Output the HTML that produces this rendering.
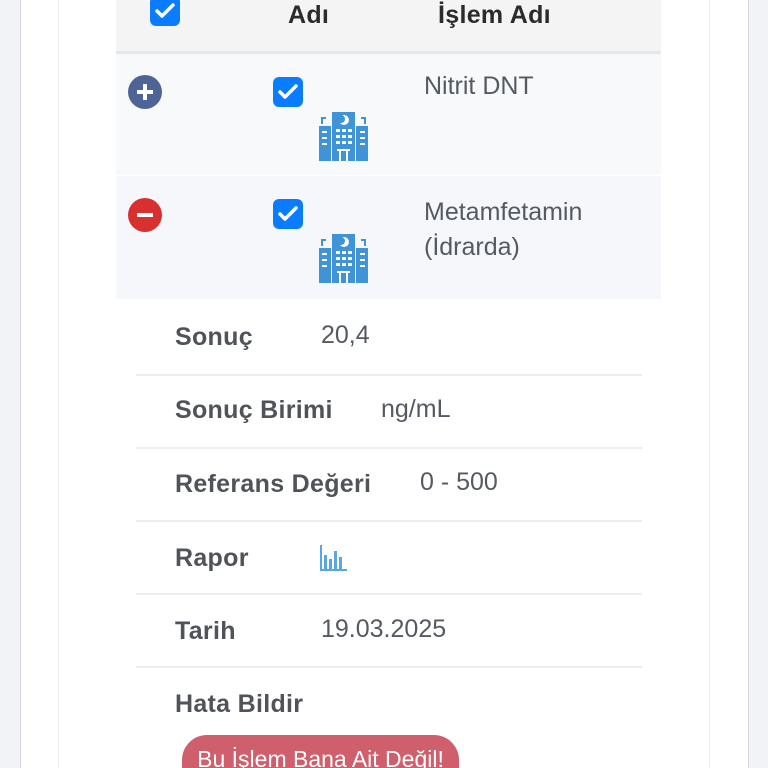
<!DOCTYPE html>
<html style="overflow:hidden;width:768px;height:768px"><head><meta charset="utf-8"><style>
body{margin:0;width:768px;height:768px;overflow:hidden;background:#f2f3f7;font-family:"Liberation Sans",sans-serif;position:relative}
.card{position:absolute;left:20px;top:0;width:727px;height:768px;background:#fff;border-left:1px solid #d8d8dc;border-right:1px solid #d8d8dc}
.vl{position:absolute;top:0;height:768px;width:1px;background:#ececf0}
.hdr{position:absolute;left:116px;top:0;width:545px;height:51px;background:#f4f4f5;border-bottom:3px solid #e6e7ea}
.row{position:absolute;left:116px;width:545px;background:#f8f9fb}
.cb{position:absolute;width:30px;height:30px;background:#0a7cff;border-radius:6px}
.cb svg{position:absolute;left:5px;top:6px}
.t{position:absolute;font-size:25px;color:#555a62}
.b{position:absolute;font-size:25px;font-weight:bold;color:#50535a;letter-spacing:0.3px}
.sep{position:absolute;left:136px;width:506px;height:2px;background:#ededef}
.circ{position:absolute;width:34px;height:34px;border-radius:50%}
</style></head><body>
<div class="card"></div>
<div class="vl" style="left:58px"></div>
<div class="vl" style="left:709px"></div>
<div class="hdr"></div>
<div class="cb" style="left:150px;top:-4px"><svg width="20" height="18" viewBox="0 0 20 18"><path d="M2 9l5 5L18 3" stroke="#fff" stroke-width="3.5" fill="none" stroke-linecap="round" stroke-linejoin="round"/></svg></div>
<div class="b" style="left:288px;top:1px;color:#2b2b2e">Adı</div>
<div class="b" style="left:438px;top:1px;color:#2b2b2e">İşlem Adı</div>

<div class="row" style="top:54px;height:121px"></div>
<div class="row" style="top:176px;height:123px;background:#f6f7fa"></div>

<div class="circ" style="left:128px;top:75px;background:#4f6496"><svg width="34" height="34"><path d="M17 9v16M9 17h16" stroke="#fff" stroke-width="4"/></svg></div>
<div class="circ" style="left:128px;top:198px;background:#d7302f"><svg width="34" height="34"><path d="M9 17h16" stroke="#fff" stroke-width="4"/></svg></div>

<div class="cb" style="left:273px;top:77px"><svg width="20" height="18" viewBox="0 0 20 18"><path d="M2 9l5 5L18 3" stroke="#fff" stroke-width="3.5" fill="none" stroke-linecap="round" stroke-linejoin="round"/></svg></div>
<div class="cb" style="left:273px;top:199px"><svg width="20" height="18" viewBox="0 0 20 18"><path d="M2 9l5 5L18 3" stroke="#fff" stroke-width="3.5" fill="none" stroke-linecap="round" stroke-linejoin="round"/></svg></div>

<svg style="position:absolute;left:319px;top:112px" width="49" height="49" viewBox="0 0 49 49"><g fill="#3f93d6"><rect x="0" y="14" width="12" height="35"/><rect x="37" y="14" width="12" height="35"/><rect x="13" y="0" width="23" height="49"/><path d="M2 12V5h5v2H4v5zM47 12V5h-5v2h3v5z"/></g><circle cx="25" cy="8" r="5" fill="#fff"/><circle cx="22" cy="7" r="4" fill="#3f93d6"/><g fill="#fff"><rect x="17" y="17" width="4" height="3"/><rect x="23" y="17" width="4" height="3"/><rect x="29" y="17" width="4" height="3"/><rect x="17" y="23" width="4" height="3"/><rect x="23" y="23" width="4" height="3"/><rect x="29" y="23" width="4" height="3"/><rect x="17" y="29" width="4" height="3"/><rect x="23" y="29" width="4" height="3"/><rect x="29" y="29" width="4" height="3"/><rect x="18" y="37" width="13" height="2"/><rect x="20" y="39" width="2" height="10"/><rect x="27" y="39" width="2" height="10"/><rect x="3" y="19" width="5" height="2"/><rect x="3" y="25" width="5" height="2"/><rect x="3" y="31" width="5" height="2"/><rect x="41" y="19" width="5" height="2"/><rect x="41" y="25" width="5" height="2"/><rect x="41" y="31" width="5" height="2"/></g></svg>
<svg style="position:absolute;left:319px;top:234px" width="49" height="49" viewBox="0 0 49 49"><g fill="#3f93d6"><rect x="0" y="14" width="12" height="35"/><rect x="37" y="14" width="12" height="35"/><rect x="13" y="0" width="23" height="49"/><path d="M2 12V5h5v2H4v5zM47 12V5h-5v2h3v5z"/></g><circle cx="25" cy="8" r="5" fill="#fff"/><circle cx="22" cy="7" r="4" fill="#3f93d6"/><g fill="#fff"><rect x="17" y="17" width="4" height="3"/><rect x="23" y="17" width="4" height="3"/><rect x="29" y="17" width="4" height="3"/><rect x="17" y="23" width="4" height="3"/><rect x="23" y="23" width="4" height="3"/><rect x="29" y="23" width="4" height="3"/><rect x="17" y="29" width="4" height="3"/><rect x="23" y="29" width="4" height="3"/><rect x="29" y="29" width="4" height="3"/><rect x="18" y="37" width="13" height="2"/><rect x="20" y="39" width="2" height="10"/><rect x="27" y="39" width="2" height="10"/><rect x="3" y="19" width="5" height="2"/><rect x="3" y="25" width="5" height="2"/><rect x="3" y="31" width="5" height="2"/><rect x="41" y="19" width="5" height="2"/><rect x="41" y="25" width="5" height="2"/><rect x="41" y="31" width="5" height="2"/></g></svg>

<div class="t" style="left:424px;top:72px">Nitrit DNT</div>
<div class="t" style="left:424px;top:195px;line-height:35px">Metamfetamin<br>(İdrarda)</div>

<div class="b" style="left:175px;top:323px">Sonuç</div><div class="t" style="left:321px;top:321px">20,4</div>
<div class="sep" style="top:374px"></div>
<div class="b" style="left:175px;top:396px">Sonuç Birimi</div><div class="t" style="left:381px;top:395px">ng/mL</div>
<div class="sep" style="top:447px"></div>
<div class="b" style="left:175px;top:470px">Referans Değeri</div><div class="t" style="left:420px;top:468px">0 - 500</div>
<div class="sep" style="top:520px"></div>
<div class="b" style="left:175px;top:544px">Rapor</div>
<svg style="position:absolute;left:320px;top:545px" width="27" height="26"><g fill="#57a7e6"><rect x="0" y="0" width="2" height="26"/><rect x="0" y="24" width="27" height="2"/><rect x="4" y="10" width="3" height="14"/><rect x="9" y="14" width="3" height="10"/><rect x="14" y="6" width="3" height="18"/><rect x="19" y="12" width="3" height="12"/></g></svg>
<div class="sep" style="top:593px"></div>
<div class="b" style="left:175px;top:617px">Tarih</div><div class="t" style="left:321px;top:615px">19.03.2025</div>
<div class="sep" style="top:666px"></div>
<div class="b" style="left:175px;top:690px">Hata Bildir</div>
<div style="position:absolute;left:182px;top:735px;width:277px;height:33px;overflow:hidden;border-radius:25px 25px 0 0;background:#cf5f6c;color:#fff;font-size:23px;text-align:center;line-height:48px">Bu İşlem Bana Ait Değil!</div>
</body></html>
